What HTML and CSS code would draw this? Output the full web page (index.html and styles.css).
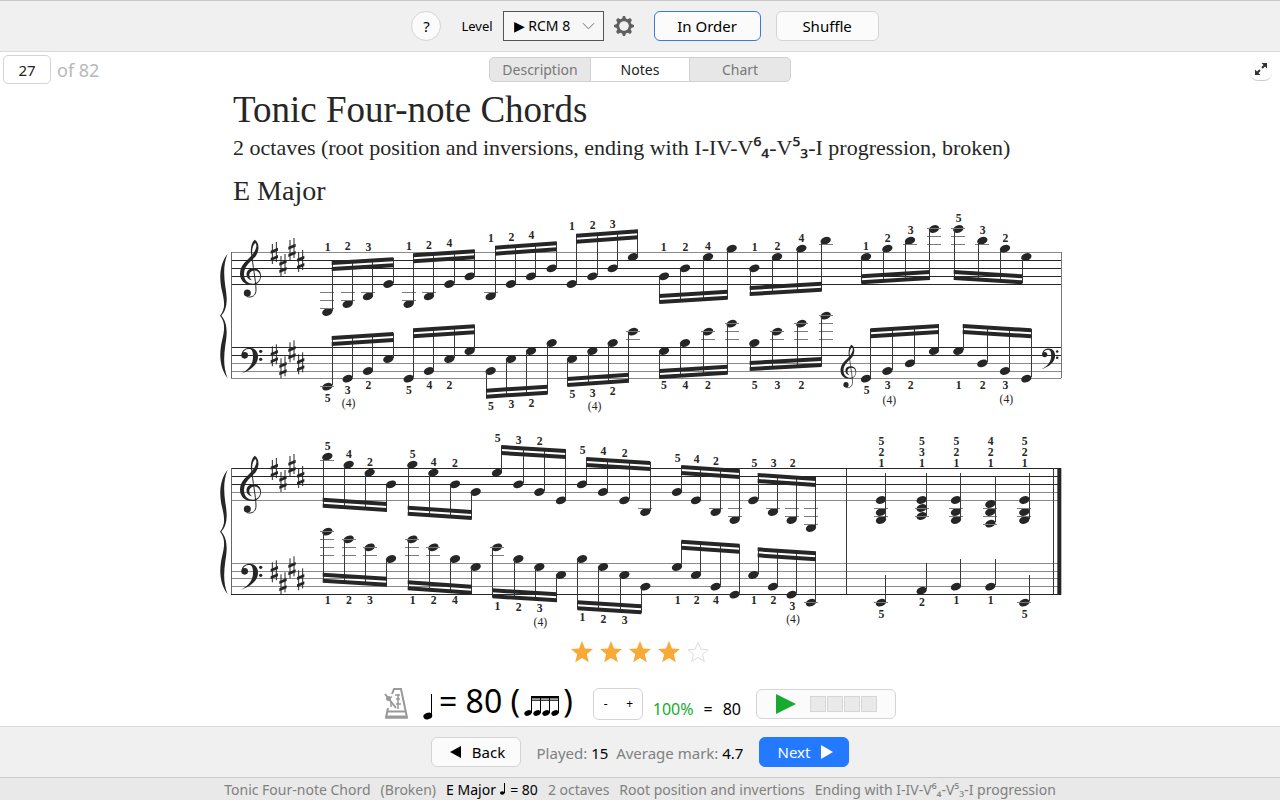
FILE: index.html
```html
<!DOCTYPE html>
<html lang="en">
<head>
<meta charset="utf-8">
<title>Tonic Four-note Chords</title>
<link rel="stylesheet" href="styles.css">
</head>
<body>
<header class="toolbar">
  <button class="btn help" type="button" aria-label="Help">?</button>
  <label class="level-label" for="level">Level</label>
  <span class="select">
    <select id="level"><option>▶ RCM 8</option></select>
    <svg class="chevron" viewBox="0 0 14 8" aria-hidden="true"><path d="M1 1l6 6 6-6"/></svg>
  </span>
  <button class="icon-btn gear" type="button" aria-label="Settings">
    <svg viewBox="0 0 20 20" width="20" height="20"><path fill="#606060" fill-rule="evenodd" d="M9 0h2l.9 2.600 1.700.7 2.500-1.200 1.800 1.800-1.200 2.500.7 1.700L20 9v2l-2.600.9-.7 1.700 1.200 2.500-1.800 1.800-2.500-1.200-1.700.7L11 20H9l-.9-2.600-1.700-.7-2.500 1.200-1.800-1.800 1.200-2.500-.7-1.700L0 11V9l2.600-.9.7-1.700-1.200-2.500 1.800-1.800 2.500 1.200 1.700-.7zM10 5.200a4.800 4.800 0 1 0 0 9.600 4.800 4.800 0 0 0 0-9.600z"/></svg>
  </button>
  <button class="btn order selected" type="button">In Order</button>
  <button class="btn shuffle" type="button">Shuffle</button>
</header>

<main class="content">
  <div class="viewbar">
    <div class="pager">
      <input class="page-input" id="page" type="text" value="27" aria-label="Item number">
      <label for="page">of 82</label>
    </div>
    <div class="tabs">
      <button type="button">Description</button>
      <button type="button" class="active">Notes</button>
      <button type="button">Chart</button>
    </div>
    <button class="icon-btn expand" type="button" aria-label="Full screen">
      <svg viewBox="0 0 14 14" width="14" height="14"><path d="M8 6l3-3M6 8l-3 3" stroke="#333" stroke-width="2"/><path d="M7.500 1H13v5.500zM1 7.500V13h5.500z" fill="#333"/></svg>
    </button>
  </div>

  <article class="sheet">
    <h1>Tonic Four-note Chords</h1>
    <p class="subtitle">2 octaves (root position and inversions, ending with I-IV-V<span class="fig">⁶₄</span>-V<span class="fig">⁵₃</span>-I progression, broken)</p>
    <h2>E Major</h2>
    <svg class="score" id="score" viewBox="0 0 2580 1275" role="img" aria-label="E major tonic four-note chords, broken">
      <defs>
        <g id="sharp"><path d="M-6-27v60M6-33v60" stroke="#262626" stroke-width="3"/><path d="M-11-7l22-9v9l-22 9zM-11 15l22-9v9l-22 9z"/></g>
        <g id="treble"><path d="M134 104C148 112 149 135 138 152C128 166 102 180 102 207C102 228 116 236 128 236C145 236 152 222 150 210C147 192 121 192 118 208C117 216 120 221 126 226C112 223 108 212 110 203C115 184 153 185 153 212C153 228 142 240 126 240C104 240 90 226 90 206C90 180 112 166 126 150C138 136 143 120 136 114C128 120 125 135 127 148L123 148C121 130 124 112 134 104Z"/><path d="M125 146C128 180 137 225 138 252C139 272 126 279 110 275" fill="none" stroke="#262626" stroke-width="3"/><circle cx="112" cy="264" r="10.500"/></g>
        <g id="bass"><path d="M95 449C96 434 107 428 119 428C135 428 144 440 144 455C144 480 120 498 91 507C115 495 129 478 129 455C129 440 126 432 117 432C107 432 100 437 98 449Z"/><circle cx="104" cy="451" r="10"/><circle cx="152" cy="439" r="5"/><circle cx="152" cy="463" r="5"/></g>
        <path id="brace" d="M53 146C30 175 26 215 36 258C46 298 44 315 30 332C44 349 46 368 36 407C26 450 30 490 53 520C40 490 41 455 46 420C54 375 50 350 34 332C50 314 54 290 46 245C41 210 40 176 53 146Z"/>
      </defs>
    </svg>
  </article>

  <div class="rating" role="img" aria-label="4 out of 5 stars">
    <svg viewBox="0 0 24 24"><path d="M12 1l3 7.500 8 .6-6.200 5.200 2 7.900L12 18l-6.800 4.200 2-7.900L1 9.100l8-.6z"/></svg>
    <svg viewBox="0 0 24 24"><path d="M12 1l3 7.500 8 .6-6.200 5.200 2 7.900L12 18l-6.800 4.200 2-7.900L1 9.100l8-.6z"/></svg>
    <svg viewBox="0 0 24 24"><path d="M12 1l3 7.500 8 .6-6.200 5.200 2 7.900L12 18l-6.800 4.200 2-7.900L1 9.100l8-.6z"/></svg>
    <svg viewBox="0 0 24 24"><path d="M12 1l3 7.500 8 .6-6.200 5.200 2 7.900L12 18l-6.800 4.200 2-7.900L1 9.100l8-.6z"/></svg>
    <svg class="empty" viewBox="0 0 24 24"><path d="M12 2.500l2.800 6.700 7.200.6-5.500 4.600 1.800 7L12 17.400l-6.300 4 1.800-7L2 9.800l7.200-.6z"/></svg>
  </div>

  <div class="tempo">
    <svg class="metronome" viewBox="0 0 25 31" fill="none" stroke="#999" stroke-width="2" aria-hidden="true"><path d="M8 6l2-5h7l6 28.500H2L4 20"/><path d="M3 23.500h18"/><path d="M2 29h21" stroke-width="3"/><path d="M1 6l11 14" stroke-width="2"/><circle cx="4.500" cy="10.500" r="2.500" fill="#999" stroke="none"/><path d="M5 11l3-2.500M7 13v6M14 6v15M11 7h5M12 11h4M12 16h5" stroke-width="1.500"/></svg>
    <div class="mark">
      <svg class="quarter" viewBox="0 0 10 26" width="10" height="26" aria-label="Quarter note"><path d="M8.500 0v22" stroke="#000"/><ellipse cx="4.800" cy="22" rx="4.500" ry="3.300" transform="rotate(-20 4.800 22)"/></svg>
      <span class="bpm">= 80 (</span>
      <svg class="sixteenths" viewBox="0 0 36 20" width="36" height="20" aria-label="Four sixteenth notes"><path d="M7 0h28v2.500H7z"/><path d="M7 3.500h28V5H7z" fill="#444"/><path d="M7.500 0v17M16.500 0v17M25.500 0v17M34.500 0v17" stroke="#000"/><ellipse cx="4" cy="17" rx="3.800" ry="2.600" transform="rotate(-20 4 17)"/><ellipse cx="13" cy="17" rx="3.800" ry="2.600" transform="rotate(-20 13 17)"/><ellipse cx="22" cy="17" rx="3.800" ry="2.600" transform="rotate(-20 22 17)"/><ellipse cx="31" cy="17" rx="3.800" ry="2.600" transform="rotate(-20 31 17)"/></svg>
      <span class="bpm">)</span>
    </div>
    <div class="stepper"><button type="button" aria-label="Slower">-</button><button type="button" aria-label="Faster">+</button></div>
    <div class="percent"><span class="green">100%</span><span>=</span><span>80</span></div>
    <div class="player">
      <button class="icon-btn" type="button" aria-label="Play"><svg viewBox="0 0 20 20" width="20" height="20"><path d="M0 0l20 10L0 20z" fill="#16ab2e"/></svg></button>
      <div class="beats"><i></i><i></i><i></i><i></i></div>
    </div>
  </div>
</main>

<footer>
  <div class="navbar">
    <button class="btn nav" type="button"><svg viewBox="0 0 11 12" width="11" height="12"><path d="M11 0v12L0 6z"/></svg>Back</button>
    <p class="stats">Played: <b>15</b>&nbsp; Average mark: <b>4.7</b></p>
    <button class="btn nav next" type="button">Next<svg viewBox="0 0 12 14" width="12" height="14"><path d="M0 0v14l12-7z"/></svg></button>
  </div>
  <div class="status">
    <span>Tonic Four-note Chord</span><span>(Broken)</span><span class="dark">E Major <svg viewBox="0 0 5 12" width="5" height="12"><path d="M4.500 0v10" stroke="#000"/><ellipse cx="2.300" cy="10" rx="2.300" ry="1.800"/></svg> = 80</span><span>2 octaves</span><span>Root position and invertions</span><span>Ending with I-IV-V⁶₄-V⁵₃-I progression</span>
  </div>
</footer>
<script src="score.js"></script>
</body>
</html>
```
FILE: styles.css
```css
* { box-sizing: border-box; }
body {
  margin: 0;
  min-height: 100vh;
  display: flex;
  flex-direction: column;
  background: #fff;
  color: #000;
  font: 15px/20px "Noto Sans", "Open Sans", sans-serif;
}
button, input, select { font: inherit; color: inherit; }
button { cursor: pointer; }
svg { display: block; flex: none; }
h1, h2, p { margin: 0; font-weight: 400; }

.toolbar {
  display: flex;
  justify-content: center;
  align-items: center;
  height: 52px;
  padding-left: 10px;
  background: #f0f0f0;
  border-top: 1px solid #c8c8c8;
  border-bottom: 1px solid #d9d9d9;
}
.btn {
  height: 30px;
  padding: 0;
  background: #fbfbfb;
  border: 1px solid #d4d4d4;
  border-radius: 6px;
}
.help { width: 30px; border-radius: 50%; margin-right: 20px; }
.level-label { font-size: 13px; margin-right: 10px; }
.select { display: grid; align-items: center; margin-right: 10px; }
.select select, .chevron { grid-area: 1 / 1; }
.select select {
  width: 101px;
  height: 30px;
  padding: 0 10px;
  appearance: none;
  background: #f7f7f7;
  border: 1px solid #555;
  border-radius: 0;
  font-size: 14px;
}
.chevron {
  width: 13px;
  height: 8px;
  justify-self: end;
  margin-right: 9px;
  fill: none;
  stroke: #666;
  pointer-events: none;
}
.icon-btn { display: flex; padding: 0; border: 0; background: none; }
.gear { margin-right: 20px; }
.order { width: 107px; margin-right: 15px; }
.shuffle { width: 103px; }
.selected { border-color: #3b78e0; }

.content { flex: 1; display: flex; flex-direction: column; align-items: center; }
.viewbar {
  width: 100%;
  display: grid;
  grid-template-columns: 1fr auto 1fr;
  align-items: center;
  padding: 3px 3px 4px;
}
.pager { display: flex; align-items: center; gap: 6px; font-size: 18px; color: #b8b8b8; }
.page-input {
  width: 48px;
  height: 29px;
  padding: 0;
  text-align: center;
  font-size: 15px;
  color: #222;
  background: #fff;
  border: 1px solid #d4d4d4;
  border-radius: 5px;
}
.tabs {
  display: grid;
  grid-template-columns: repeat(3, 1fr);
  width: 302px;
  height: 25px;
  overflow: hidden;
  background: #e7e7e7;
  border: 1px solid #cfcfcf;
  border-radius: 5px;
}
.tabs button {
  padding: 0;
  border: 0;
  background: none;
  color: #777;
  font-size: 14px;
}
.tabs .active { background: #fff; color: #222; border: solid #cfcfcf; border-width: 0 1px; }
.expand {
  justify-self: end;
  align-items: center;
  justify-content: center;
  width: 22px;
  height: 22px;
  margin-right: 5px;
  background: #fdfdfd;
  border-bottom: 1px solid #cccccc;
  border-radius: 8px;
}

.sheet {
  width: 100%;
  max-width: 860px;
  color: #262626;
  font-family: "Liberation Serif", serif;
}
.sheet h1, .sheet h2, .subtitle { padding-left: 23px; white-space: nowrap; }
.sheet h1 { font-size: 37px; line-height: 43px; }
.subtitle { font-size: 22px; line-height: 30px; }
.fig { font-family: "Noto Sans", sans-serif; font-weight: 500; }
.sheet h2 { font-size: 28px; line-height: 28px; padding-top: 14px; }
.score { width: 100%; height: auto; fill: #262626; }
.finger { font: bold 35px "Liberation Serif", serif; text-anchor: middle; }
.alt { font-weight: 400; }
.staff-line { stroke-width: 3; shape-rendering: crispEdges; }
.stem { stroke: #3a3a3a; stroke-width: 3; shape-rendering: crispEdges; }
.ledger { stroke: #7a7a7a; }

.rating { display: flex; gap: 5px; padding-top: 10px; }
.rating svg { width: 24px; height: 24px; fill: #f9a935; }
.rating .empty { fill: none; stroke: #ddd; stroke-width: 1px; }

.tempo { display: flex; align-items: center; padding-top: 17px; }
.metronome { width: 25px; height: 31px; margin-right: 14px; }
.mark { display: flex; align-items: center; margin-right: 20px; }
.quarter { margin: 6px 6px 0 0; }
.bpm { font-size: 32px; line-height: 40px; padding-bottom: 5px; }
.sixteenths { margin: 4px 3px 0 4px; }
.stepper {
  display: grid;
  grid-template-columns: 1fr 1fr;
  width: 50px;
  height: 32px;
  margin-right: 10px;
  border: 1px solid #d4d4d4;
  border-radius: 6px;
}
.stepper button { padding: 0; border: 0; background: none; font-size: 12px; }
.percent { display: flex; gap: 10px; padding-top: 10px; margin-right: 15px; font-size: 16px; }
.green { color: #16ab2e; }
.player {
  display: flex;
  align-items: center;
  gap: 14px;
  width: 140px;
  height: 30px;
  padding-left: 19px;
  background: #fbfbfb;
  border: 1px solid #d4d4d4;
  border-radius: 6px;
}
.beats { display: flex; gap: 1px; }
.beats i { width: 16px; height: 16px; background: #e9e9e9; border: 1px solid #d6d6d6; }

.navbar {
  display: flex;
  justify-content: center;
  align-items: center;
  height: 52px;
  background: #f0f0f0;
  border-top: 1px solid #d9d9d9;
  border-bottom: 1px solid #cccccc;
}
.nav { display: flex; align-items: center; justify-content: center; gap: 11px; width: 90px; padding-left: 4px; }
.next { background: #2379ff; border-color: #2379ff; color: #fff; fill: #fff; padding: 0 0 0 2px; }
.stats { margin: 2px 16px 0; color: #808080; }
.stats b { font-weight: 400; color: #000; }
.status {
  display: flex;
  justify-content: center;
  gap: 10px;
  height: 23px;
  background: #e9e9e9;
  color: #808080;
  font-size: 14px;
  line-height: 23px;
  white-space: nowrap;
}
.dark { color: #000; }
.status svg { display: inline-block; margin-right: 2px; }
```
FILE: score.js
```js
// Score units: three per pixel at the sheet's full width.
const svg = document.getElementById('score');
const DARK = '#262626', SOFT = '#8a8a8a';

function add(parent, name, attrs, text) {
  const el = document.createElementNS('http://www.w3.org/2000/svg', name);
  for (const k in attrs) el.setAttribute(k, attrs[k]);
  if (text) el.textContent = text;
  parent.appendChild(el);
  return el;
}
const line = (g, x1, y1, x2, y2, cls, extra) =>
  add(g, 'line', Object.assign({ x1, y1, x2, y2, class: cls }, extra));

function head(g, x, y, top, bottom) {
  add(g, 'ellipse', { cx: x, cy: y, rx: 16, ry: 11, transform: `rotate(-20 ${x} ${y})` });
  for (let l = bottom + 24; l <= y + 5; l += 24) line(g, x - 21, l, x + 21, l, 'stem ledger');
  for (let l = top - 24; l >= y - 5; l -= 24) line(g, x - 21, l, x + 21, l, 'stem ledger');
}

function finger(g, x, y, t) {
  add(g, 'text', { x, y, class: t.length > 1 ? 'finger alt' : 'finger' }, t);
}

// dir: 1 stems up, -1 stems down; b0 and b1 are the beam's outer edge at each end
function beamed(g, dir, xs, ys, b0, b1, fingers, top, bottom) {
  const dx = dir > 0 ? 14 : -13;
  const x0 = xs[0] + dx, x3 = xs[3] + dx;
  xs.forEach((x, i) => {
    head(g, x, ys[i], top, bottom);
    line(g, x + dx, ys[i] - dir * 4, x + dx, b0 + (b1 - b0) * (x + dx - x0) / (x3 - x0) + dir * 3, 'stem');
  });
  [0, 18].forEach(o => {
    const a = b0 + dir * o, b = b1 + dir * o, t = dir * 12;
    add(g, 'path', { d: `M${x0 - 1} ${a}L${x3 + 1} ${b}V${b + t}L${x0 - 1} ${a + t}Z` });
  });
  fingers.forEach(f => finger(g, f[0], f[1], f[2]));
}

const systems = [
  {
    y: 0, shift: 0,
    lines: [[142, 0], [166, 1], [190, 1], [214, 1], [238, 1], [427, 1], [451, 1], [475, 0], [499, 0], [520, 0]],
    treble: [
      [1, [352, 413, 474, 535], [321, 297, 274, 237], 168, 157, [[353, 138, '1'], [413, 135, '2'], [475, 137, '3']]],
      [1, [596, 657, 718, 779], [297, 274, 237, 214], 145, 133, [[597, 135, '1'], [657, 131, '2'], [718, 127, '4']]],
      [1, [842, 903, 963, 1025], [274, 237, 214, 190], 122, 109, [[843, 110, '1'], [904, 107, '2'], [964, 103, '4']]],
      [1, [1085, 1147, 1208, 1269], [237, 214, 190, 156], 86, 73, [[1086, 75, '1'], [1148, 72, '2'], [1208, 69, '3']]],
      [-1, [1362, 1425, 1494, 1565], [214, 190, 156, 131], 297, 284, [[1361, 138, '1'], [1426, 138, '2'], [1494, 136, '4']]],
      [-1, [1633, 1701, 1774, 1847], [190, 156, 131, 107], 273, 260, [[1634, 138, '1'], [1702, 134, '2'], [1774, 111, '4']]],
      [-1, [1968, 2032, 2100, 2172], [156, 131, 107, 72], 238, 225, [[1968, 134, '1'], [2033, 111, '2'], [2102, 87, '3']]],
      [-1, [2245, 2317, 2385, 2449], [72, 107, 131, 156], 225, 238, [[2246, 52, '5'], [2318, 87, '3'], [2386, 111, '2']]]
    ],
    bass: [
      [1, [352, 413, 474, 535], [545, 521, 498, 462], 393, 381, [[353, 590, '5'], [413, 567, '3'], [416, 606, '(4)'], [475, 551, '2']]],
      [1, [596, 657, 718, 779], [521, 498, 462, 438], 370, 358, [[597, 567, '5'], [658, 551, '4'], [718, 551, '2']]],
      [-1, [842, 903, 963, 1025], [498, 462, 438, 414], 581, 569, [[843, 614, '5'], [904, 610, '3'], [964, 607, '2']]],
      [-1, [1086, 1147, 1208, 1269], [462, 438, 414, 380], 546, 533, [[1087, 578, '5'], [1148, 575, '3'], [1154, 616, '(4)'], [1208, 571, '2']]],
      [-1, [1362, 1425, 1494, 1565], [438, 414, 380, 356], 522, 509, [[1362, 552, '5'], [1426, 552, '4'], [1494, 552, '2']]],
      [-1, [1633, 1701, 1774, 1847], [414, 380, 356, 332], 498, 486, [[1634, 552, '5'], [1702, 552, '3'], [1774, 552, '2']]],
      [1, [1968, 2032, 2100, 2172], [521, 498, 475, 438], 370, 357, [[1970, 567, '5'], [2033, 552, '3'], [2038, 597, '(4)'], [2102, 552, '2']]],
      [1, [2245, 2317, 2385, 2449], [438, 475, 498, 521], 357, 370, [[2246, 552, '1'], [2318, 552, '2'], [2386, 552, '3'], [2389, 593, '(4)']]]
    ]
  },
  {
    y: 660, shift: -12,
    lines: [[130, 1], [154, 1], [178, 1], [202, 0], [226, 0], [415, 0], [439, 0], [460, 0], [484, 0], [508, 1]],
    treble: [
      [-1, [352, 416, 479, 543], [95, 119, 143, 178], 248, 261, [[353, 75, '5'], [417, 99, '4'], [480, 122, '2']]],
      [-1, [607, 670, 735, 797], [119, 143, 178, 201], 272, 285, [[608, 99, '5'], [671, 122, '4'], [735, 127, '2']]],
      [1, [861, 925, 988, 1053], [143, 178, 201, 226], 60, 72, [[863, 52, '5'], [926, 56, '3'], [989, 60, '2']]],
      [1, [1116, 1179, 1243, 1306], [178, 201, 226, 261], 96, 108, [[1118, 87, '5'], [1180, 91, '4'], [1244, 95, '2']]],
      [1, [1401, 1458, 1517, 1574], [201, 226, 261, 285], 120, 132, [[1403, 111, '5'], [1460, 115, '4'], [1518, 119, '2']]],
      [1, [1630, 1689, 1745, 1803], [226, 261, 285, 309], 144, 156, [[1633, 126, '5'], [1691, 126, '3'], [1748, 126, '2']]]
    ],
    bass: [
      [-1, [352, 416, 479, 543], [320, 343, 367, 402], 473, 485, [[353, 538, '1'], [417, 538, '2'], [480, 538, '3']]],
      [-1, [607, 670, 735, 797], [343, 367, 402, 426], 496, 509, [[608, 538, '1'], [671, 538, '2'], [735, 538, '4']]],
      [-1, [861, 925, 988, 1053], [367, 402, 426, 450], 520, 532, [[862, 555, '1'], [926, 558, '2'], [989, 562, '3'], [991, 602, '(4)']]],
      [-1, [1116, 1179, 1243, 1306], [402, 426, 450, 485], 556, 568, [[1117, 589, '1'], [1180, 594, '2'], [1244, 598, '3']]],
      [1, [1401, 1458, 1517, 1574], [426, 450, 485, 509], 344, 356, [[1403, 538, '1'], [1460, 538, '2'], [1518, 538, '4']]],
      [1, [1630, 1689, 1745, 1803], [450, 485, 509, 533], 367, 379, [[1632, 538, '1'], [1690, 538, '2'], [1747, 554, '3'], [1749, 594, '(4)']]]
    ]
  }
];

const groups = systems.map((s, n) => {
  const g = add(svg, 'g', { transform: `translate(0 ${s.y})` });
  const top = s.lines[0][0], bottom = s.lines[9][0];
  s.lines.forEach(l => line(g, 64, l[0], 2554, l[0], 'staff-line', { stroke: l[1] ? DARK : SOFT }));
  line(g, 65, top, 65, bottom, 'staff-line', { stroke: '#666' });
  if (n === 0) line(g, 2554, top, 2554, bottom, 'staff-line', { stroke: '#777' });

  const c = add(g, 'g', { transform: `translate(0 ${s.shift})` });
  ['brace', 'treble', 'bass'].forEach(id => add(c, 'use', { href: '#' + id }));
  [0, 307].forEach(o => [[193, 144], [219, 180], [246, 132], [272, 168]].forEach(p =>
    add(c, 'use', { href: '#sharp', x: p[0], y: p[1] + o })));

  s.treble.forEach(b => beamed(g, ...b, top, s.lines[4][0]));
  s.bass.forEach(b => beamed(g, ...b, s.lines[5][0], bottom));
  return g;
});

// Clef changes in the lower staff of the first system
add(groups[0], 'use', { href: '#treble', transform: 'translate(1824 341) scale(.75)' });
add(groups[0], 'use', { href: '#bass', transform: 'translate(2423 97) scale(.78)' });

// Closing progression
const last = groups[1];
[
  [2013, [225, 261, 285], 143, '521', 533, 450, '5', 578],
  [2135, [225, 249, 273], 143, '531', 497, 415, '2', 542],
  [2238, [225, 261, 285], 143, '521', 485, 402, '1', 538],
  [2341, [237, 261, 296], 154, '421', 485, 402, '1', 538],
  [2443, [225, 261, 285], 143, '521', 533, 450, '5', 578]
].forEach(([x, ys, up, marks, by, bup, bf, bfy]) => {
  ys.forEach(y => head(last, x, y, 130, 226));
  line(last, x + 14, ys[2] - 4, x + 14, up, 'stem');
  [60, 92, 126].forEach((y, i) => finger(last, x + 1, y, marks[i]));
  head(last, x, by, 415, 508);
  line(last, x + 14, by - 4, x + 14, bup, 'stem');
  finger(last, x + 1, bfy, bf);
});
line(last, 1910, 132, 1910, 508, 'stem');
line(last, 2531, 130, 2531, 508, 'stem');
add(last, 'rect', { x: 2542, y: 129, width: 12, height: 381 });
```
